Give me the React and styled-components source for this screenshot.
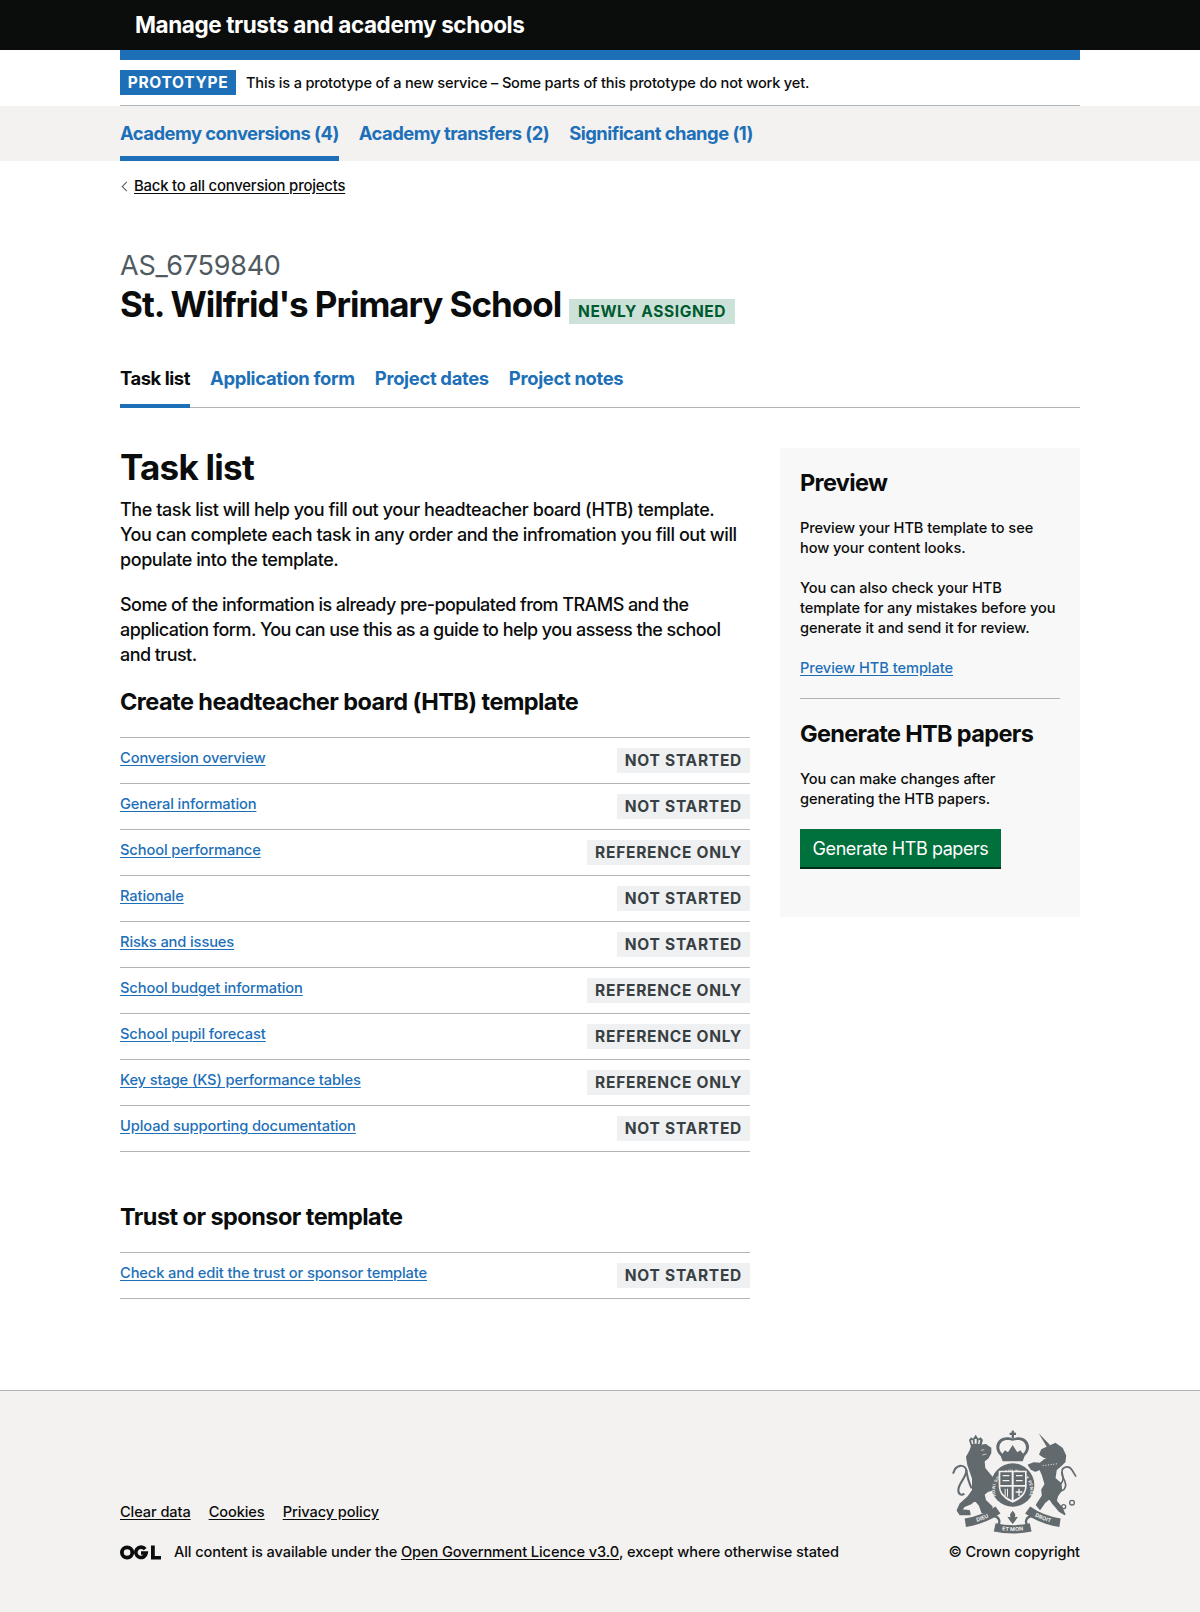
import React from 'react'
import styled, { createGlobalStyle } from 'styled-components'

const GlobalStyle = createGlobalStyle`
  html, body { margin: 0; padding: 0; background: #fff; }
  body {
    font-family: Inter, "Noto Sans", Arial, sans-serif;
    color: #0b0c0c;
  }
  * { box-sizing: border-box; }
`

const blue = '#1d70b8'
const rule = '#b1b4b6'
const crestGrey = '#626a6e'
const footerBg = '#f3f2f1'

const Page = styled.div`
  width: 1200px;
  min-height: 1612px;
  display: flex;
  flex-direction: column;
`
const Width = styled.div`
  width: 960px;
  margin: 0 auto;
`
const Header = styled.header`
  height: 50px;
  background: #0b0c0c;
  color: #fff;
  display: flex;
  align-items: center;
  padding: 0 0 2px 135px;
  font-size: 22.5px;
  font-weight: 700;
  letter-spacing: -0.41px;
`
const BlueBar = styled(Width)`
  height: 10px;
  background: ${blue};
`
const Phase = styled(Width)`
  height: 46px;
  padding-top: 10px;
  border-bottom: 1px solid ${rule};
  display: flex;
  align-items: flex-start;
  gap: 10px;
`
const PhaseTag = styled.strong`
  height: 25px;
  width: 116px;
  background: ${blue};
  color: #fff;
  font-size: 15.5px;
  font-weight: 700;
  letter-spacing: 0.7px;
  display: flex;
  align-items: center;
  justify-content: center;
`
const PhaseText = styled.span`
  font-size: 14.6px;
  line-height: 26px;
  letter-spacing: -0.19px;
  font-weight: 500;
`
const ServiceNav = styled.nav`
  height: 55px;
  background: #f3f2f1;
`
const ServiceList = styled(Width)`
  display: flex;
  gap: 20px;
  height: 55px;
`
const ServiceLink = styled.a`
  height: 55px;
  padding-top: 16px;
  font-size: 18.4px;
  font-weight: 700;
  letter-spacing: -0.52px;
  color: ${blue};
  border-bottom: ${p => (p.$active ? `5px solid ${blue}` : 'none')};
`
const BackRow = styled.div`
  margin-top: 16px;
  display: flex;
  align-items: center;
  gap: 4px;
  height: 18px;
`
const Chevron = styled.span`
  width: 7px;
  height: 7px;
  margin-left: 3px;
  border-left: 1px solid #505a5f;
  border-bottom: 1px solid #505a5f;
  transform: rotate(45deg);
`
const BackLink = styled.a`
  font-size: 14.9px;
  font-weight: 500;
  letter-spacing: -0.2px;
  color: #0b0c0c;
  text-decoration: underline;
  text-underline-offset: 2px;
`
const Caption = styled.div`
  margin-top: 55px;
  font-size: 27px;
  line-height: 32px;
  color: #505a5f;
  font-weight: 400;
  letter-spacing: -0.25px;
`
const TitleRow = styled.div`
  margin-top: 1px;
  display: flex;
  align-items: flex-end;
  gap: 8px;
  height: 42px;
`
const Title = styled.h1`
  margin: 0;
  font-size: 35px;
  line-height: 42px;
  font-weight: 700;
  letter-spacing: -1.04px;
`
const NewTag = styled.strong`
  height: 25px;
  width: 166px;
  margin-bottom: 1px;
  background: #cce2d8;
  color: #005a30;
  font-size: 15.5px;
  font-weight: 700;
  letter-spacing: 0.6px;
  display: flex;
  align-items: center;
  justify-content: center;
`
const Tabs = styled.div`
  margin-top: 33px;
  height: 50px;
  display: flex;
  gap: 20px;
  border-bottom: 1px solid ${rule};
`
const Tab = styled.a`
  height: 50px;
  padding-top: 9px;
  font-size: 18.4px;
  font-weight: 700;
  letter-spacing: ${p => (p.$active ? '-0.44px' : '-0.32px')};
  color: ${p => (p.$active ? '#0b0c0c' : blue)};
  border-bottom: ${p => (p.$active ? `4px solid ${blue}` : 'none')};
`
const Columns = styled.div`
  margin-top: 40px;
  display: grid;
  grid-template-columns: 630px 300px;
  gap: 30px;
  align-items: start;
`
const Heading = styled.h1`
  margin: 0 0 11px;
  font-size: 35px;
  line-height: 38px;
  font-weight: 700;
  letter-spacing: -0.75px;
`
const Lead = styled.p`
  margin: 0 0 20px;
  font-size: 18px;
  line-height: 25px;
  font-weight: 500;
  letter-spacing: ${p => (p.$tight ? '-0.56px' : '-0.42px')};
`
const SectionTitle = styled.h2`
  margin: ${p => p.$top}px 0 20px;
  font-size: 23.5px;
  line-height: 30px;
  font-weight: 700;
  letter-spacing: -0.55px;
`
const TaskList = styled.ul`
  margin: 0;
  padding: 0;
  list-style: none;
  border-top: 1px solid ${rule};
`
const TaskRow = styled.li`
  height: 46px;
  border-bottom: 1px solid ${rule};
  display: flex;
  justify-content: space-between;
  align-items: flex-start;
  padding-top: 10px;
`
const TaskLink = styled.a`
  font-size: 14.7px;
  line-height: 20px;
  font-weight: 500;
  letter-spacing: -0.13px;
  color: ${blue};
  text-decoration: underline;
  text-underline-offset: 2px;
`
const Status = styled.strong`
  height: 25px;
  padding: 0 8px;
  background: #eef0f1;
  color: #383f43;
  font-size: 15.5px;
  font-weight: 700;
  letter-spacing: 0.74px;
  display: flex;
  align-items: center;
`
const Side = styled.aside`
  background: #f8f8f8;
  padding: 20px;
  height: 469px;
`
const SideTitle = styled.h2`
  margin: 0 0 20px;
  font-size: 23.5px;
  line-height: 30px;
  font-weight: 700;
  letter-spacing: -0.66px;
`
const SideText = styled.p`
  margin: 0 0 20px;
  font-size: 14.6px;
  line-height: 20px;
  font-weight: 500;
  letter-spacing: -0.08px;
`
const SideLink = styled.a`
  display: block;
  font-size: 14.6px;
  line-height: 20px;
  font-weight: 500;
  letter-spacing: -0.05px;
  color: ${blue};
  text-decoration: underline;
  text-underline-offset: 2px;
`
const SideRule = styled.hr`
  margin: 20px 0 20px;
  border: 0;
  border-top: 1px solid ${rule};
`
const GreenButton = styled.button`
  width: 201px;
  height: 40px;
  border: 0;
  border-bottom: 2px solid #002d18;
  background: #00703c;
  color: #fff;
  font-family: inherit;
  font-size: 18px;
  font-weight: 400;
  letter-spacing: -0.44px;
  padding: 0;
`
const Footer = styled.footer`
  margin-top: auto;
  height: 222px;
  background: ${footerBg};
  border-top: 1px solid ${rule};
`
const FooterInner = styled(Width)`
  height: 221px;
  display: flex;
  justify-content: space-between;
`
const FooterLeft = styled.div`
  padding-top: 111px;
`
const FooterLinks = styled.div`
  display: flex;
  gap: 18px;
  height: 20px;
  margin-bottom: 20px;
`
const FooterLink = styled.a`
  font-size: 14.6px;
  line-height: 20px;
  font-weight: 500;
  letter-spacing: -0.09px;
  color: #0b0c0c;
  text-decoration: underline;
  text-underline-offset: 2px;
`
const Licence = styled.div`
  display: flex;
  align-items: center;
  gap: 13px;
  font-size: 14.6px;
  line-height: 20px;
  letter-spacing: -0.1px;
  font-weight: 500;
`
const FooterRight = styled.div`
  padding-top: 34px;
  display: flex;
  flex-direction: column;
  align-items: flex-end;
`
const CrestSvg = styled.svg`
  margin-right: -2px;
`
const Copyright = styled.div`
  margin-top: 2px;
  font-size: 14.6px;
  line-height: 20px;
  font-weight: 500;
  letter-spacing: -0.1px;
`

const OglLogo = () => (
  <svg width="41" height="15" viewBox="0 0 41 15" aria-hidden="true">
    <circle cx="7.1" cy="7.5" r="5.2" fill="none" stroke="#0b0c0c" strokeWidth="3.8" />
    <path d="M25.2 4.2 A5.2 5.2 0 1 0 26.2 8 H21" fill="none" stroke="#0b0c0c" strokeWidth="3.6" />
    <path d="M31 0.5 H34.8 V11 H41 V14.5 H31 Z" fill="#0b0c0c" />
  </svg>
)

// Hand drawing of the royal arms in the footer. Lion and unicorn are traced
// from crops of the screenshot, hence the two translated groups.
const Crest = () => (
  <CrestSvg width="137" height="115" viewBox="135 75 411 345" fill={crestGrey} aria-hidden="true">
    <g transform="translate(135 75)">
      <path d="M72 45 l6 -8 6 4 8 -12 8 12 7 -4 7 8 -6 20 h-30 z" />
      <path d="M78 46 l5 -1 2 12 h-4 z M89 42 h6 v14 h-6 z M101 45 l5 1 -3 11 h-4 z" fill={footerBg} />
      <path
        d="M80 66 L122 60 L136 70 L136 84 L128 98 L116 108 L118 130 L136 152 L158 178 L162 198 L148 192 L128 198 L116 208 L120 226 L140 246 L138 264 L112 262 L104 240 L90 224 L76 236 L56 244 L48 256 L72 258 L74 268 L46 268 L38 256 L46 238 L70 216 L84 196 L84 160 L70 120 L66 96 L76 78 Z"
        stroke={crestGrey}
        strokeWidth="6"
        strokeLinejoin="round"
      />
      <path d="M108 76 l10 -2 M112 90 l12 -3" stroke={footerBg} strokeWidth="2" />
      <path d="M80 190 C70 170 66 150 64 135 C60 120 42 118 30 132 L24 146" fill="none" stroke={crestGrey} strokeWidth="6" />
      <path d="M64 135 C66 155 40 175 40 195 C40 210 50 212 58 206" fill="none" stroke={crestGrey} strokeWidth="6" />
    </g>

    <g transform="translate(336 75)">
      <path d="M80 25 L114 60 L106 68 Z" />
      <path
        d="M108 66 L130 56 L150 70 L160 92 L158 110 L146 122 L132 134 L128 160 L146 176 L148 196 L136 212 L132 228 L150 250 L158 268 L142 258 L122 234 L112 220 L98 232 L84 252 L74 240 L92 212 L90 194 L100 178 L92 150 L84 132 L70 138 L58 132 L50 120 L66 114 L84 116 L96 106 L108 100 L96 96 L84 88 L90 74 Z"
        stroke={crestGrey}
        strokeWidth="5"
        strokeLinejoin="round"
      />
      <path d="M92 122 L138 116" fill="none" stroke={footerBg} strokeWidth="3" strokeDasharray="3 5" />
      <path d="M146 176 C160 165 150 150 150 140 C150 125 170 120 180 135 L192 155" fill="none" stroke={crestGrey} strokeWidth="5" />
      <path d="M150 140 C146 155 166 170 160 186 C156 198 146 200 140 194" fill="none" stroke={crestGrey} strokeWidth="5" />
      <g fill="none" stroke={crestGrey} strokeWidth="4">
        <circle cx="128" cy="232" r="6" />
        <circle cx="155" cy="245" r="6" />
        <circle cx="180" cy="233" r="7" />
      </g>
    </g>

    {/* royal crown */}
    <rect x="335" y="92" width="7" height="24" />
    <rect x="329" y="98" width="19" height="7" />
    <path d="M338 116 c-12 -6 -30 -6 -42 6 -12 14 -8 34 6 46 l6 16 h60 l6 -16 c14 -12 18 -32 6 -46 -12 -12 -30 -12 -42 -6z M338 122 c-8 -2 -24 -5 -33 4 -10 10 -9 26 2 35 l8 -10 9 6 14 -22 14 22 9 -6 8 10 c11 -9 12 -25 2 -35 -9 -9 -25 -6 -33 -4z" fillRule="evenodd" />

    {/* garter and shield */}
    <circle cx="338" cy="255" r="65" />
    <path id="garterArc" d="M298 305 A53 53 0 1 1 378 305" fill="none" />
    <text fontSize="12.5" fontWeight="700" fill={footerBg} fontFamily="Inter, sans-serif" letterSpacing="1">
      <textPath href="#garterArc" startOffset="50%" textAnchor="middle">HONI SOIT QUI MAL Y PENSE</textPath>
    </text>
    <path d="M296 212 h84 v46 c0 26 -22 42 -42 50 -20 -8 -42 -24 -42 -50 z" fill={footerBg} />
    <path d="M301 217 h34 v38 h-34 z M341 217 h34 v38 h-34 z M301 260 h34 v40 c-16 -8 -34 -20 -34 -40 z M341 260 h34 c0 20 -18 32 -34 40 z" />
    <path d="M308 225 h20 v4 h-20 z M308 240 h20 v4 h-20 z M348 225 h20 v4 h-20 z M348 240 h20 v4 h-20 z M314 266 v24 h3 v-24 z M321 266 v24 h3 v-24 z" fill={footerBg} />
    <path d="M355 266 h4 v8 h8 v4 h-8 v10 h-4 v-10 h-8 v-4 h8 z" fill={footerBg} />

    {/* motto scroll */}
    <g fill="none" stroke={crestGrey}>
      <path id="scrollLeft" d="M196 368 Q 250 360 294 330" strokeWidth="26" />
      <path id="scrollMiddle" d="M284 382 Q 338 394 392 382" strokeWidth="25" />
      <path id="scrollRight" d="M383 330 Q 425 360 480 368" strokeWidth="26" />
      <path d="M282 348 C 300 352 302 368 292 378" strokeWidth="7" />
      <path d="M395 348 C 376 352 374 368 384 378" strokeWidth="7" />
    </g>
    <path d="M338 332 c8 8 10 14 6 20 l10 -2 -8 12 -8 10 -8 -10 -8 -12 10 2 c-4 -6 -2 -12 6 -20z" />
    <g fontSize="16" fontWeight="700" fill={footerBg} fontFamily="Inter, sans-serif" textAnchor="middle">
      <text dy="5"><textPath href="#scrollLeft" startOffset="50%">DIEU</textPath></text>
      <text dy="5"><textPath href="#scrollMiddle" startOffset="50%">ET MON</textPath></text>
      <text dy="5"><textPath href="#scrollRight" startOffset="50%">DROIT</textPath></text>
    </g>
  </CrestSvg>
)

const tasks = [
  ['Conversion overview', 'NOT STARTED'],
  ['General information', 'NOT STARTED'],
  ['School performance', 'REFERENCE ONLY'],
  ['Rationale', 'NOT STARTED'],
  ['Risks and issues', 'NOT STARTED'],
  ['School budget information', 'REFERENCE ONLY'],
  ['School pupil forecast', 'REFERENCE ONLY'],
  ['Key stage (KS) performance tables', 'REFERENCE ONLY'],
  ['Upload supporting documentation', 'NOT STARTED'],
]

const renderTask = ([name, status]) => (
  <TaskRow key={name}>
    <TaskLink>{name}</TaskLink>
    <Status>{status}</Status>
  </TaskRow>
)

export default function App() {
  return (
    <Page>
      <GlobalStyle />
      <Header>Manage trusts and academy schools</Header>
      <BlueBar />
      <Phase>
        <PhaseTag>PROTOTYPE</PhaseTag>
        <PhaseText>This is a prototype of a new service – Some parts of this prototype do not work yet.</PhaseText>
      </Phase>
      <ServiceNav>
        <ServiceList>
          <ServiceLink $active>Academy conversions (4)</ServiceLink>
          <ServiceLink>Academy transfers (2)</ServiceLink>
          <ServiceLink>Significant change (1)</ServiceLink>
        </ServiceList>
      </ServiceNav>
      <Width>
        <BackRow>
          <Chevron />
          <BackLink>Back to all conversion projects</BackLink>
        </BackRow>
        <Caption>AS_6759840</Caption>
        <TitleRow>
          <Title>St. Wilfrid's Primary School</Title>
          <NewTag>NEWLY ASSIGNED</NewTag>
        </TitleRow>
        <Tabs>
          <Tab $active>Task list</Tab>
          <Tab>Application form</Tab>
          <Tab>Project dates</Tab>
          <Tab>Project notes</Tab>
        </Tabs>
        <Columns>
          <main>
            <Heading>Task list</Heading>
            <Lead>
              The task list will help you fill out your headteacher board (HTB) template.<br />
              You can complete each task in any order and the infromation you fill out will<br />
              populate into the template.
            </Lead>
            <Lead $tight>
              Some of the information is already pre-populated from TRAMS and the<br />
              application form. You can use this as a guide to help you assess the school<br />
              and trust.
            </Lead>
            <SectionTitle $top={0}>Create headteacher board (HTB) template</SectionTitle>
            <TaskList>{tasks.map(renderTask)}</TaskList>
            <SectionTitle $top={50}>Trust or sponsor template</SectionTitle>
            <TaskList>
              {renderTask(['Check and edit the trust or sponsor template', 'NOT STARTED'])}
            </TaskList>
          </main>
          <Side>
            <SideTitle>Preview</SideTitle>
            <SideText>Preview your HTB template to see<br />how your content looks.</SideText>
            <SideText>You can also check your HTB<br />template for any mistakes before you<br />generate it and send it for review.</SideText>
            <SideLink>Preview HTB template</SideLink>
            <SideRule />
            <SideTitle>Generate HTB papers</SideTitle>
            <SideText>You can make changes after<br />generating the HTB papers.</SideText>
            <GreenButton>Generate HTB papers</GreenButton>
          </Side>
        </Columns>
      </Width>
      <Footer>
        <FooterInner>
          <FooterLeft>
            <FooterLinks>
              <FooterLink>Clear data</FooterLink>
              <FooterLink>Cookies</FooterLink>
              <FooterLink>Privacy policy</FooterLink>
            </FooterLinks>
            <Licence>
              <OglLogo />
              <span>All content is available under the <FooterLink>Open Government Licence v3.0</FooterLink>, except where otherwise stated</span>
            </Licence>
          </FooterLeft>
          <FooterRight>
            <Crest />
            <Copyright>© Crown copyright</Copyright>
          </FooterRight>
        </FooterInner>
      </Footer>
    </Page>
  )
}
